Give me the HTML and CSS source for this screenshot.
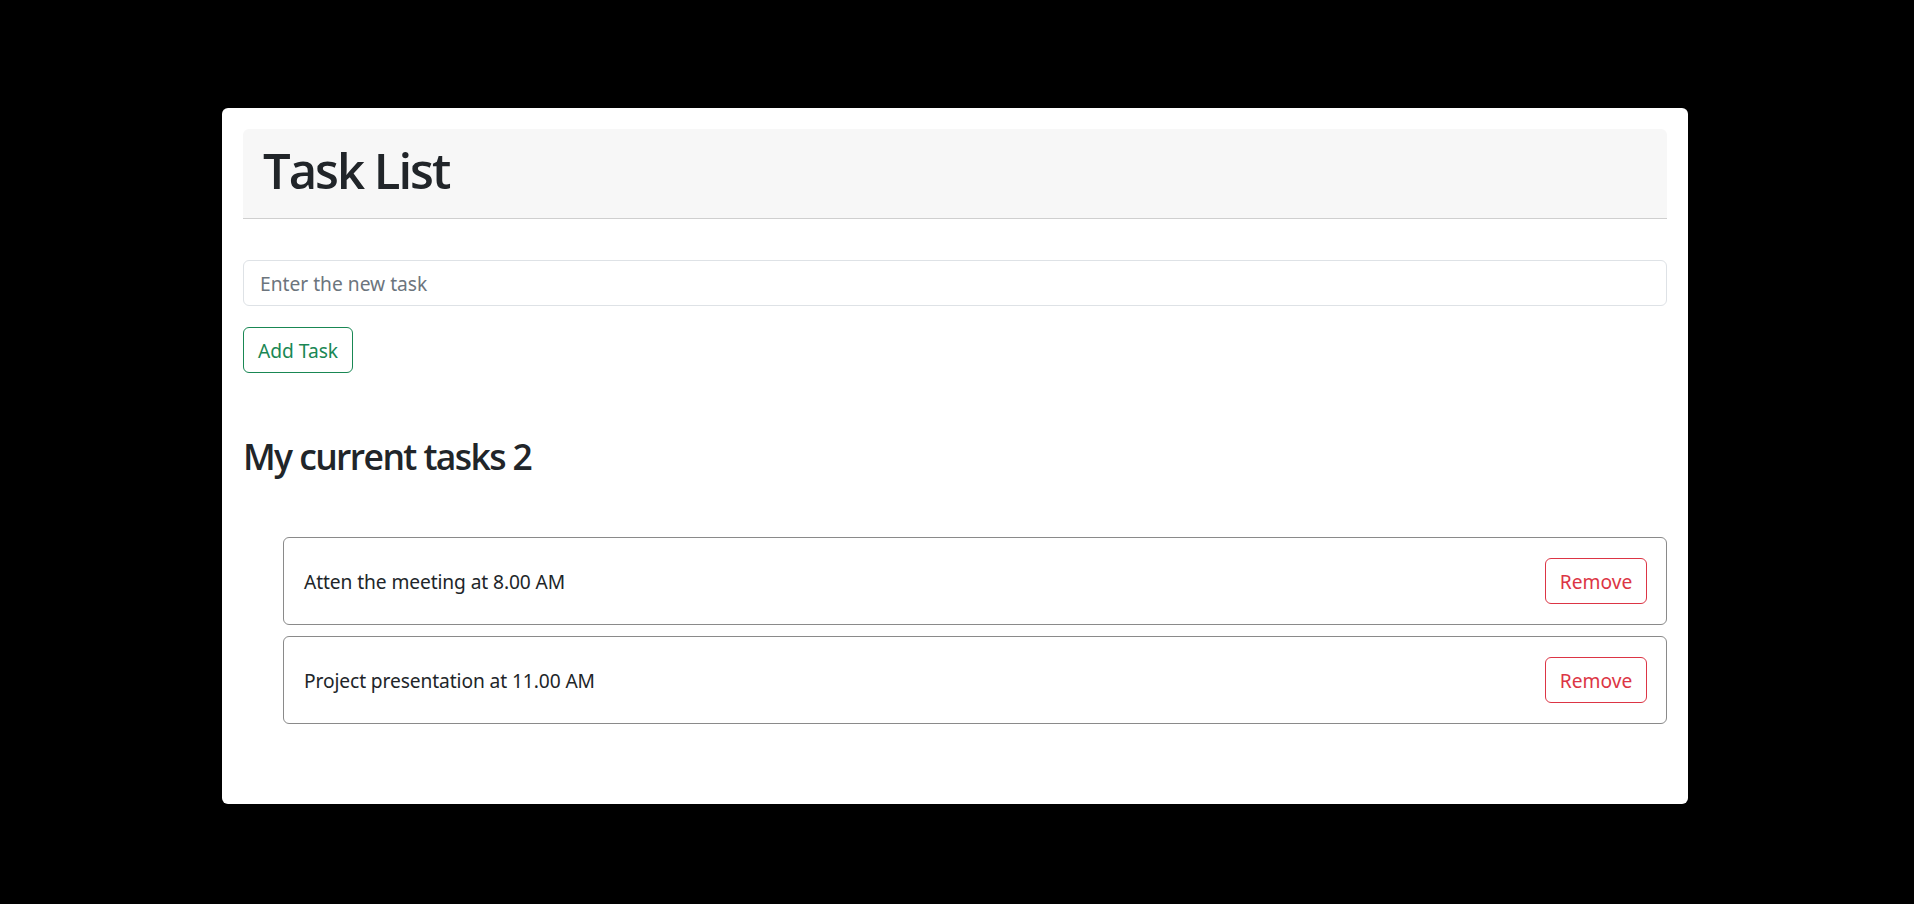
FILE: index.html
```html
<!DOCTYPE html>
<html lang="en">
<head>
<meta charset="utf-8">
<title>Task List</title>
<link rel="stylesheet" href="styles.css">
</head>
<body>
  <main class="card">
    <header class="card-header">
      <h1 class="title">Task List</h1>
    </header>
    <form class="task-form">
      <input class="task-input" type="text" placeholder="Enter the new task">
      <button class="btn btn-add" type="button">Add Task</button>
    </form>
    <h2 class="subtitle">My current tasks 2</h2>
    <ul class="task-list">
      <li class="task-item">
        <span class="task-text">Atten the meeting at 8.00 AM</span>
        <button class="btn btn-remove" type="button">Remove</button>
      </li>
      <li class="task-item">
        <span class="task-text">Project presentation at 11.00 AM</span>
        <button class="btn btn-remove" type="button">Remove</button>
      </li>
    </ul>
  </main>
</body>
</html>
```

FILE: styles.css
```css
* { box-sizing: border-box; }

html, body {
  margin: 0;
  padding: 0;
  background: #000;
}

body {
  font-family: "Noto Sans", "Open Sans", "DejaVu Sans", sans-serif;
  color: #212529;
  font-size: 19.2px;
  padding-top: 108px;
  padding-left: 222px;
}

.card {
  width: 1466px;
  height: 696px;
  background: #fff;
  border-radius: 6px;
  padding: 21px;
}

.card-header {
  background: #f7f7f7;
  border-bottom: 1px solid #cfcfcf;
  border-radius: 6px 6px 0 0;
  height: 90px;
  padding: 11px 20px 0 20px;
}

.title {
  margin: 0;
  font-family: "Open Sans", "Noto Sans", sans-serif;
  font-size: 49px;
  font-weight: 600;
  line-height: 61px;
  letter-spacing: -2px;
}

.task-form {
  display: flex;
  flex-direction: column;
  align-items: flex-start;
  gap: 21px;
  margin-top: 41px;
}

.task-input {
  width: 100%;
  height: 46px;
  border: 1px solid #dee2e6;
  border-radius: 6px;
  padding: 0 16px;
  font-family: inherit;
  font-size: 19.2px;
  color: #212529;
  outline: none;
}

.task-input::placeholder {
  color: #6c757d;
}

.btn {
  font-family: inherit;
  font-size: 19.2px;
  background: #fff;
  border-radius: 6px;
  height: 46px;
  padding: 0;
  white-space: nowrap;
  text-align: center;
  cursor: pointer;
}

.btn-add {
  width: 110px;
  border: 1px solid #198754;
  color: #198754;
}

.btn-remove {
  width: 102px;
  border: 1px solid #dc3545;
  color: #dc3545;
}

.subtitle {
  margin: 61px 0 0 0;
  font-family: "Open Sans", "Noto Sans", sans-serif;
  font-size: 35.5px;
  font-weight: 600;
  line-height: 44px;
  letter-spacing: -1.6px;
}

.task-list {
  list-style: none;
  margin: 59px 0 0 0;
  padding: 0 0 0 40px;
  display: flex;
  flex-direction: column;
  gap: 11px;
}

.task-item {
  display: flex;
  align-items: center;
  justify-content: space-between;
  border: 1px solid #8a8a8a;
  border-radius: 6px;
  padding: 20px 19px 20px 20px;
  height: 88px;
}

.task-text {
  font-size: 19.2px;
  letter-spacing: -0.1px;
}
```
